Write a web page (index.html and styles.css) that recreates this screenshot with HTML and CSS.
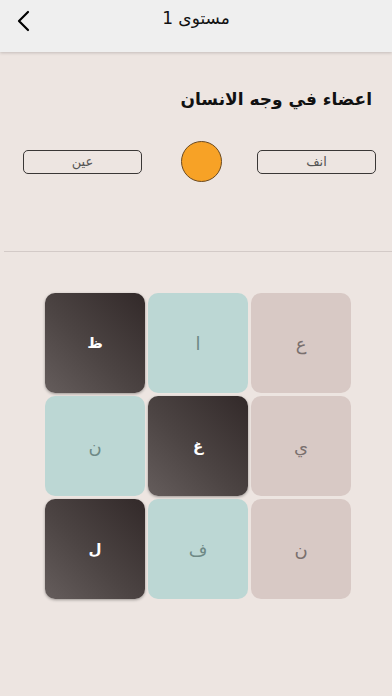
FILE: index.html
```html
<!DOCTYPE html>
<html lang="ar">
<head>
<meta charset="utf-8">
<link rel="stylesheet" href="styles.css">
</head>
<body>
<header class="topbar">
  <button class="back" aria-label="back">
    <svg width="14" height="22" viewBox="0 0 14 22"><path d="M12 2 L3 11 L12 20" fill="none" stroke="#000" stroke-width="2.2" stroke-linecap="round" stroke-linejoin="round"/></svg>
  </button>
  <h1 class="title" dir="rtl">مستوى 1</h1>
</header>
<main class="content">
  <h2 class="question" dir="rtl">اعضاء في وجه الانسان</h2>
  <div class="answers">
    <div class="answer" dir="rtl">عين</div>
    <div class="dot"></div>
    <div class="answer" dir="rtl">انف</div>
  </div>
  <hr class="divider">
  <div class="grid">
    <div class="tile dark">ظ</div>
    <div class="tile teal">ا</div>
    <div class="tile pink">ع</div>
    <div class="tile teal">ن</div>
    <div class="tile dark">غ</div>
    <div class="tile pink">ي</div>
    <div class="tile dark">ل</div>
    <div class="tile teal">ف</div>
    <div class="tile pink">ن</div>
  </div>
</main>
</body>
</html>
```
FILE: styles.css
```css
* { box-sizing: border-box; }
html, body {
  margin: 0;
  padding: 0;
  width: 392px;
  height: 696px;
  background: #ede5e1;
  font-family: "DejaVu Sans", "Noto Sans", sans-serif;
  overflow: hidden;
}
.topbar {
  height: 52px;
  background: #efefef;
  box-shadow: 0 1px 3px rgba(0,0,0,0.18);
  display: flex;
  align-items: center;
  justify-content: center;
  position: relative;
}
.back {
  position: absolute;
  left: 15px;
  top: 10px;
  border: 0;
  background: none;
  padding: 0;
  width: 16px;
  height: 22px;
}
.title {
  margin: 0 0 16px 0;
  font-size: 17px;
  font-weight: normal;
  color: #111;
}
.content {
  padding: 0;
}
.question {
  margin: 37px 20px 0 0;
  text-align: right;
  font-size: 17px;
  font-weight: bold;
  color: #111;
}
.answers {
  display: flex;
  align-items: center;
  justify-content: space-between;
  margin: 32px 16px 0 23px;
}
.answer {
  width: 119px;
  height: 24px;
  border: 1.5px solid #3a3736;
  border-radius: 5px;
  display: flex;
  align-items: center;
  justify-content: center;
  font-size: 13px;
  color: #555;
}
.dot {
  width: 41px;
  height: 41px;
  border-radius: 50%;
  background: #f7a226;
  border: 1.5px solid #6a4a22;
  margin-left: 3px;
}
.divider {
  margin: 69px 0 0 4px;
  border: 0;
  height: 1px;
  background: #d3cac7;
}
.grid {
  margin: 41px 0 0 45px;
  display: grid;
  grid-template-columns: repeat(3, 100px);
  grid-auto-rows: 100px;
  gap: 3px;
}
.tile {
  border-radius: 10px;
  display: flex;
  align-items: center;
  justify-content: center;
  font-size: 18px;
}
.dark {
  background: linear-gradient(45deg, #655d5c 0%, #4c4443 45%, #322929 100%);
  color: #fff;
  font-size: 15px;
  font-weight: bold;
  box-shadow: 0 1px 3px rgba(0,0,0,0.35);
}
.teal {
  background: #bcd7d4;
  color: #6e8986;
}
.pink {
  background: #d8c9c5;
  color: #7a706e;
}
```
